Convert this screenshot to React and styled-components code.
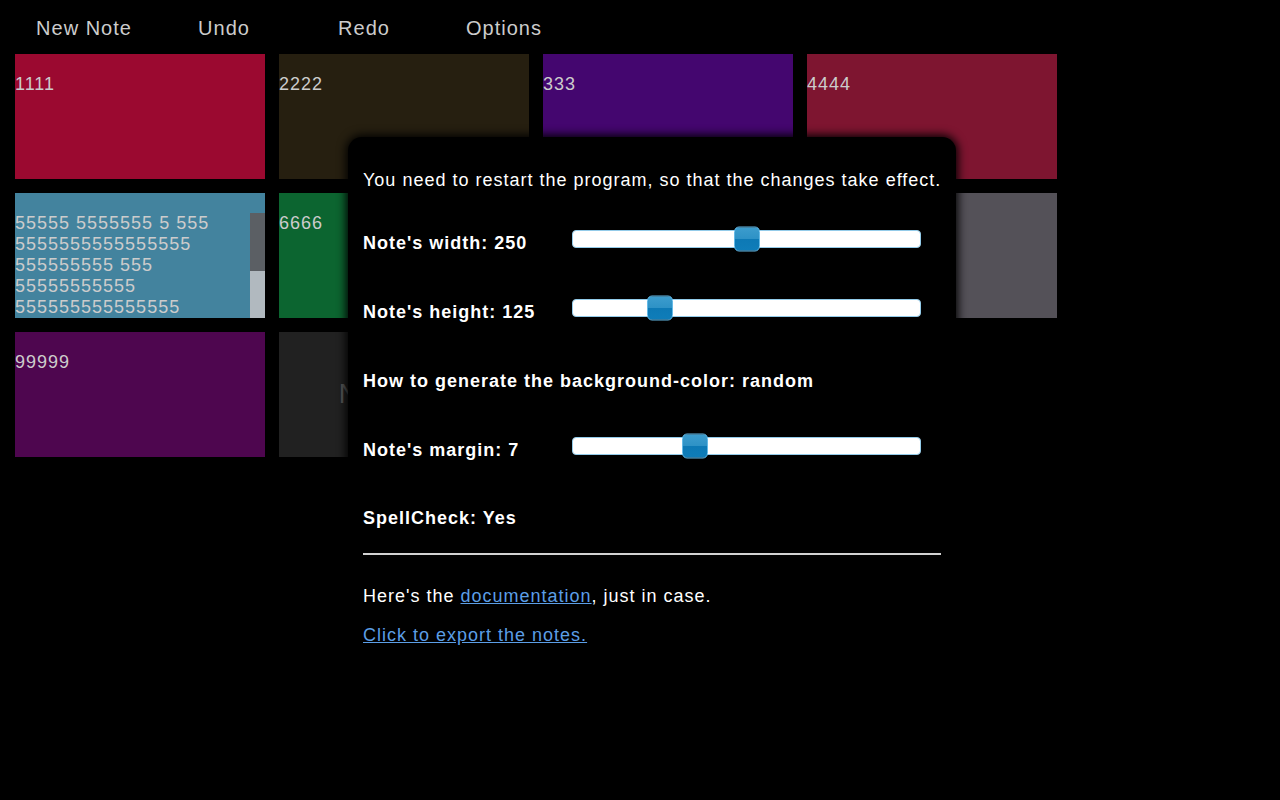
import React from "react";
import styled, { createGlobalStyle } from "styled-components";

const Global = createGlobalStyle`
  html, body { background: #000; }
  body {
    margin: 8px;
    font-family: "Liberation Sans", Arial, sans-serif;
    letter-spacing: 1px;
    color: #ccc;
  }
`;

const Page = styled.div`
  position: relative;
  min-height: 784px;
`;

const Toolbar = styled.nav`
  display: flex;
  height: 39px;
  padding-left: 6px;
`;

const ToolButton = styled.button`
  width: 140px;
  height: 39px;
  background: none;
  border: none;
  padding: 2px 0 0;
  color: #ccc;
  font-family: "Liberation Sans", Arial, sans-serif;
  font-size: 20px;
  letter-spacing: 1px;
  text-align: center;
  cursor: pointer;
`;

const NotesGrid = styled.div`
  display: flex;
  flex-wrap: wrap;
  width: 1056px;
`;

const Card = styled.div`
  width: 250px;
  height: 125px;
  margin: 7px;
  background: ${(p) => p.$bg};
  display: flex;
  flex-direction: column;
`;

const CardHandle = styled.div`
  height: 20px;
  flex: none;
`;

const CardBody = styled.div`
  flex: 1;
  min-height: 0;
  display: flex;
`;

const NoteText = styled.textarea`
  flex: 1;
  min-width: 0;
  margin: 0;
  padding: 0;
  border: none;
  outline: none;
  resize: none;
  background: transparent;
  color: #ccc;
  font-family: "Liberation Sans", Arial, sans-serif;
  font-size: 18px;
  line-height: 21px;
  letter-spacing: 1px;
  overflow: hidden;
`;

const ScrollTrack = styled.div`
  width: 15px;
  flex: none;
  background: #b1b9bf;
  display: flex;
  flex-direction: column;
`;

const ScrollThumb = styled.div`
  background: #5b5f64;
`;

const NewCard = styled.div`
  width: 250px;
  height: 125px;
  margin: 7px;
  background: #212121;
  display: flex;
  align-items: center;
  justify-content: center;
  color: #585858;
  font-size: 27px;
  letter-spacing: 1.5px;
`;

const Dialog = styled.div`
  position: absolute;
  left: 340px;
  top: 129px;
  width: 608px;
  box-sizing: border-box;
  padding: 33px 15px 20px;
  background: #000;
  border-radius: 14px;
  box-shadow: 0 0 10px 2px #000;
  color: #fff;
  font-size: 18px;
  line-height: 21px;
  letter-spacing: 1px;
`;

const Notice = styled.p`
  margin: 0;
  letter-spacing: 1px;
  white-space: nowrap;
`;

const SettingRow = styled.div`
  display: flex;
  align-items: center;
  height: 21px;
  margin-top: ${(p) => p.$top}px;
`;

const Label = styled.span`
  min-width: 209px;
  font-weight: bold;
  white-space: nowrap;
`;

const Track = styled.div`
  position: relative;
  width: 349px;
  height: 18px;
  box-sizing: border-box;
  margin-bottom: 10px;
  background: #fff;
  border: 1px solid #93cbe9;
  border-radius: 4px;
`;

const Thumb = styled.div`
  position: absolute;
  top: 50%;
  transform: translateY(-50%);
  width: 26px;
  height: 25px;
  box-sizing: border-box;
  margin-left: -1px;
  border: 1px solid #64b9e6;
  border-radius: 5px;
  background: linear-gradient(
    to bottom,
    #3c9ccd 0%,
    #2e92c6 48%,
    #0d79b5 52%,
    #0f7db9 100%
  );
`;

const Rule = styled.hr`
  margin: 24px 0 0;
  border: none;
  height: 2px;
  background: #d2d2d2;
`;

const Para = styled.p`
  margin: ${(p) => p.$top}px 0 0;
`;

const Link = styled.a`
  color: #5c9ee6;
  text-decoration: underline;
`;

function Slider({ frac }) {
  return (
    <Track>
      <Thumb style={{ left: `${frac * (349 - 26)}px` }} />
    </Track>
  );
}

const notes = [
  { bg: "#9b0930", text: "1111" },
  { bg: "#261f10", text: "2222" },
  { bg: "#44066f", text: "333" },
  { bg: "#7e1530", text: "4444" },
  {
    bg: "#43839e",
    text:
      "55555 5555555 5 555 5555555555555555 555555555 555 55555555555 555555555555555 555555555 55555 555 55555555 5555",
    scroll: 0.55,
  },
  { bg: "#0c6530", text: "6666" },
  { bg: "#3a2a5e", text: "77777" },
  { bg: "#545158", text: "8888" },
  { bg: "#4e064f", text: "99999" },
];

export default function App() {
  return (
    <Page>
      <Global />
      <Toolbar>
        <ToolButton>New Note</ToolButton>
        <ToolButton>Undo</ToolButton>
        <ToolButton>Redo</ToolButton>
        <ToolButton>Options</ToolButton>
      </Toolbar>
      <NotesGrid>
        {notes.map((n, i) => (
          <Card key={i} $bg={n.bg}>
            <CardHandle />
            <CardBody>
              <NoteText defaultValue={n.text} spellCheck={false} />
              {n.scroll && (
                <ScrollTrack>
                  <ScrollThumb style={{ height: `${n.scroll * 100}%` }} />
                </ScrollTrack>
              )}
            </CardBody>
          </Card>
        ))}
        <NewCard>New Note</NewCard>
      </NotesGrid>
      <Dialog>
        <Notice>You need to restart the program, so that the changes take effect.</Notice>
        <SettingRow $top={42}>
          <Label>Note's width: 250</Label>
          <Slider frac={0.5} />
        </SettingRow>
        <SettingRow $top={48}>
          <Label>Note's height: 125</Label>
          <Slider frac={0.232} />
        </SettingRow>
        <SettingRow $top={48}>
          <Label>How to generate the background-color: random</Label>
        </SettingRow>
        <SettingRow $top={48}>
          <Label>Note's margin: 7</Label>
          <Slider frac={0.341} />
        </SettingRow>
        <SettingRow $top={47}>
          <Label>SpellCheck: Yes</Label>
        </SettingRow>
        <Rule />
        <Para $top={31}>
          Here's the <Link href="#">documentation</Link>, just in case.
        </Para>
        <Para $top={18}>
          <Link href="#">Click to export the notes.</Link>
        </Para>
      </Dialog>
    </Page>
  );
}
